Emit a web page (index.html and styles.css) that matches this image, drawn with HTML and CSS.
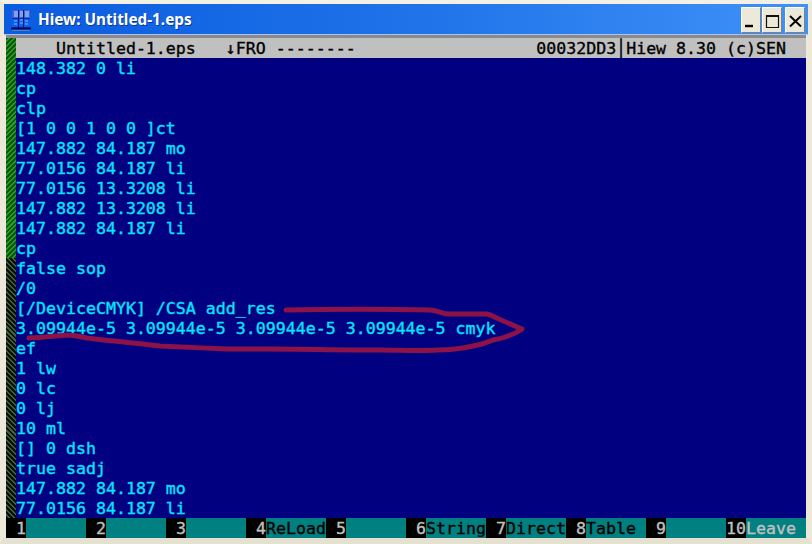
FILE: index.html
```html
<!DOCTYPE html>
<html lang="en">
<head>
<meta charset="utf-8">
<title>Hiew: Untitled-1.eps</title>
<link rel="stylesheet" href="styles.css">
</head>
<body>
<div class="window">
  <header class="titlebar">
    <svg class="appicon" width="20" height="21" viewBox="0 0 20 21">
      <rect x="1" y="0" width="18" height="19" fill="#0c2aa8"/>
      <path d="M1 0h18v8H1z" fill="#3a62d8"/>
      <path d="M1 9h18v8H1z" fill="#0f5cf0"/>
      <path d="M3 2h4M3 4h4M3 6h4M9 2h3M9 4h3M9 6h3M14 2h4M14 4h4M14 6h4" stroke="#c8dcff" stroke-width="1"/>
      <path d="M7.5 0v17M12.5 0v17" stroke="#0a1a70" stroke-width="1"/>
      <path d="M3 11h3M3 14h3M9 10h3M9 13h3M14 11h3M14 14h3" stroke="#62c8ff" stroke-width="1"/>
      <path d="M0 18.5h20" stroke="#06104a" stroke-width="2"/>
      <path d="M1 20.500h18" stroke="#5a7ad0" stroke-width="1"/>
    </svg>
    <span class="title">Hiew: Untitled-1.eps</span>
    <div class="winbtns">
      <button class="winbtn" aria-label="Minimize"><svg width="20" height="26" viewBox="0 0 20 26"><path d="M4 19h8" stroke="#000" stroke-width="2.4"/></svg></button>
      <button class="winbtn" aria-label="Maximize"><svg width="20" height="26" viewBox="0 0 20 26"><path d="M4.500 8.500h12v12h-12z" fill="none" stroke="#111" stroke-width="1.200"/><path d="M4 9h13" stroke="#111" stroke-width="2"/></svg></button>
      <button class="winbtn close" aria-label="Close"><svg width="20" height="26" viewBox="0 0 20 26"><path d="M5 9l11 10.500M16 9L5 19.500" stroke="#000" stroke-width="1.900"/></svg></button>
    </div>
  </header>
  <main class="term">
    <div class="strip"><div class="thumb"></div><div class="rail"></div></div>
    <div class="screen">
      <div class="status"><pre class="st-left">    Untitled-1.eps   ↓FRO --------</pre><pre class="st-right">00032DD3│Hiew 8.30 (c)SEN</pre></div>
      <pre class="code">148.382 0 li
cp
clp
[1 0 0 1 0 0 ]ct
147.882 84.187 mo
77.0156 84.187 li
77.0156 13.3208 li
147.882 13.3208 li
147.882 84.187 li
cp
false sop
/0
[/DeviceCMYK] /CSA add_res
3.09944e-5 3.09944e-5 3.09944e-5 3.09944e-5 cmyk
ef
1 lw
0 lc
0 lj
10 ml
[] 0 dsh
true sadj
147.882 84.187 mo
77.0156 84.187 li</pre>
    </div>
    <div class="fnbar">
      <div class="fn"><b>1</b><span></span></div>
      <div class="fn"><b>2</b><span></span></div>
      <div class="fn"><b>3</b><span></span></div>
      <div class="fn"><b>4</b><span>ReLoad</span></div>
      <div class="fn"><b>5</b><span></span></div>
      <div class="fn"><b>6</b><span>String</span></div>
      <div class="fn"><b>7</b><span>Direct</span></div>
      <div class="fn"><b>8</b><span>Table</span></div>
      <div class="fn"><b>9</b><span></span></div>
      <div class="fn"><b>10</b><span class="leave">Leave</span></div>
    </div>
  </main>
  <svg class="markup" width="812" height="544" viewBox="0 0 812 544">
    <path d="M286 310 C330 309 390 309 430 310 C440 311 442 314 450 314 L487 314 C492 315 496 318 501 320 L522 329 C515 334 505 338 493 340 C485 343 480 345 473 346 C460 349 450 350 437 350 C420 351 400 350 380 350 C340 350 300 349 270 349 C255 349 240 349 227 349 C205 348 180 347 160 346 C140 344 125 342 113 341 C100 340 95 339 87 338 C78 336 72 335 67 335 C55 336 40 338 29 338" fill="none" stroke="#8c1248" stroke-width="5" stroke-linecap="round" stroke-linejoin="round"/>
  </svg>
</div>
</body>
</html>
```
FILE: styles.css
```css
* { box-sizing: border-box; }
html, body { margin: 0; padding: 0; }
body { width: 812px; height: 544px; overflow: hidden; background: #fff; }
.window {
  width: 812px; height: 544px;
  display: flex; flex-direction: column;
  background: #ece9d8;
  border-top: 4px solid #f3f1e6;
  border-left: 4px solid #ece9d8;
  border-right: 4px solid #ece9d8;
  border-bottom: 6px solid #e4e1d0;
  position: relative;
}
.titlebar {
  height: 31px; flex: none;
  display: flex; align-items: center;
  padding: 0 3px 0 7px;
  background: linear-gradient(90deg, #0a5ce0 0%, #1f72e8 50%, #3f92f8 100%);
  border-bottom: 1px solid #a9c4f0;
}
.appicon { flex: none; margin-top: 3px; }
.title {
  margin-left: 7px;
  font: bold 15.3px "Noto Sans", "Liberation Sans", sans-serif;
  color: #fff;
  text-shadow: 1px 1px 0 #0a3aa0;
}
.winbtns { margin-left: auto; display: flex; gap: 1px; margin-top: 2px; }
.winbtn {
  width: 20px; height: 26px; padding: 0; margin: 0;
  background: #ece9d8;
  border: 1px solid; border-color: #fff #808080 #808080 #fff;
  display: flex;
}
.winbtn.close { margin-left: 2px; }
.winbtn svg { display: block; margin: -1px; flex: none; }
.term {
  flex: 1; min-height: 0; margin: 0 2px;
  display: grid;
  grid-template-columns: 10px 790px;
  grid-template-rows: 480px 20px;
  border-top: 3px solid #8a8a8a;
}
.strip { display: flex; flex-direction: column; }
.thumb {
  height: 220px;
  background: repeating-linear-gradient(135deg, #0a5a0a 0 2px, #2a9a2a 2px 3.500px);
}
.rail {
  flex: 1;
  background: repeating-linear-gradient(45deg, #0a0f0a 0 2px, #3f5f3f 2px 3.500px);
}
.screen {
  background: #000080;
  display: flex; flex-direction: column;
  overflow: hidden;
}
pre { margin: 0; font: inherit; }
.screen, .fnbar {
  font-family: "DejaVu Sans Mono", monospace;
  font-size: 16.6px;
  line-height: 20px;
  -webkit-text-stroke: 0.35px currentColor;
}
.status {
  flex: none; height: 20px;
  background: #c0c0c0; color: #000;
  display: flex; justify-content: space-between;
  padding-right: 20px;
  line-height: 22px;
  overflow: hidden;
}
.code { color: #06e4ff; padding-top: 1px; }
.fnbar {
  grid-column: 1 / -1;
  display: grid;
  grid-template-columns: repeat(10, 80px);
  background: #008080;
  line-height: 22px;
  overflow: hidden;
}
.fn { display: flex; min-width: 0; height: 20px; }
.fn b {
  flex: none; width: 20px; font-weight: normal;
  background: #000; color: #c0c0c0; text-align: right;
}
.fn span { flex: 1; color: #000; white-space: pre; }
.fn .leave { color: #c0c0c0; }
.markup { position: absolute; left: -4px; top: -4px; pointer-events: none; }
```
